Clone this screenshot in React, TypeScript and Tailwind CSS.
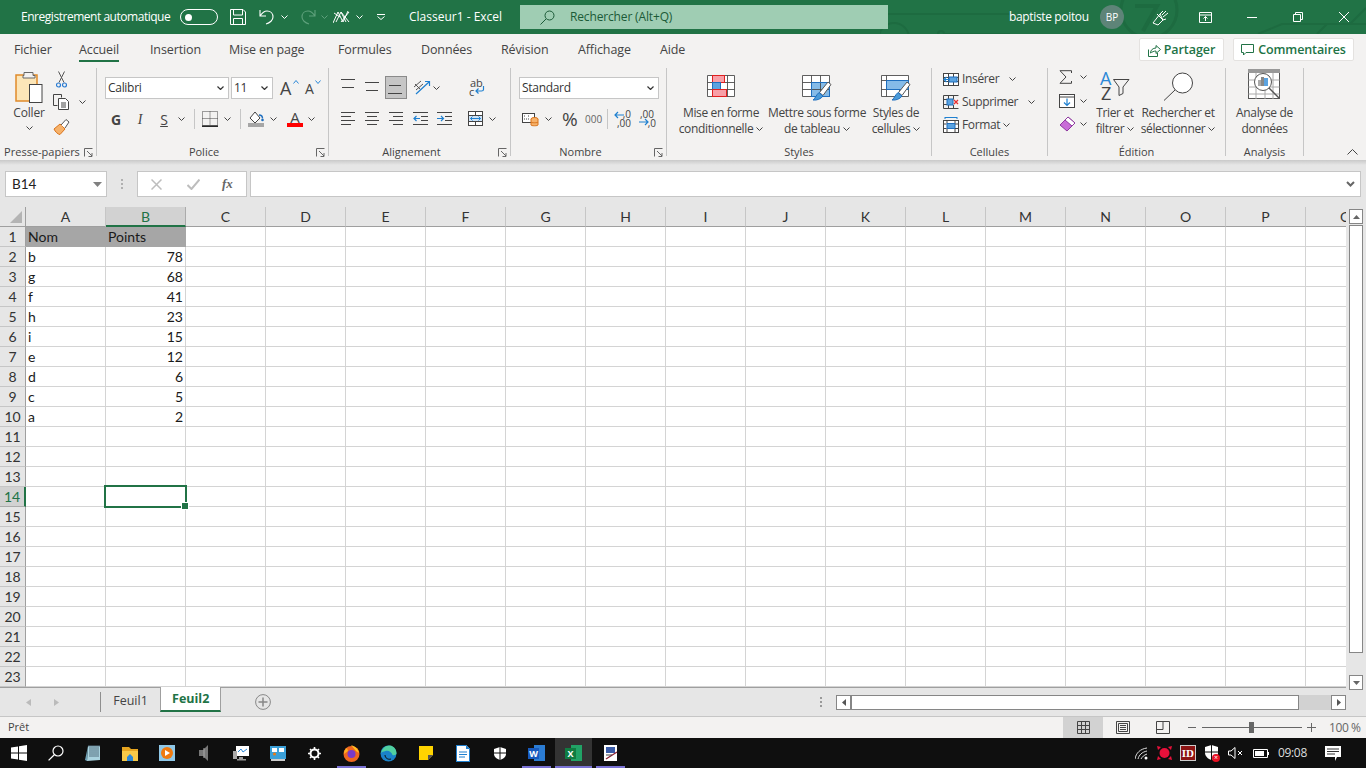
import React from "react";

const UI = "font-['Open_Sans','Noto_Sans',sans-serif]";
const CAL = "font-['Lato','Carlito',sans-serif]";

type SP = { w: number; h: number; children: React.ReactNode; className?: string };
const S = ({ w, h, children, className }: SP) => (
  <svg width={w} height={h} viewBox={`0 0 ${w} ${h}`} fill="none" className={`shrink-0 block ${className ?? ""}`}>
    {children}
  </svg>
);

const Chev = ({ c = "#444", className }: { c?: string; className?: string }) => (
  <S w={7} h={4} className={className}>
    <path d="M.5.5l3 3 3-3" stroke={c} strokeWidth="1" />
  </S>
);

const Launcher = () => (
  <S w={9} h={9}>
    <path d="M.5 8.5V.5h8M3 3l5 5M8 5v3.500H4.500" stroke="#666" />
  </S>
);

const Lines = ({ ws, gap = 4, c = "#444" }: { ws: [number, number][]; gap?: number; c?: string }) => (
  <S w={16} h={(ws.length - 1) * gap + 1}>
    {ws.map(([x, w], i) => (
      <path key={i} d={`M${x} ${i * gap + 0.5}h${w}`} stroke={c} />
    ))}
  </S>
);

const Group = ({ w, label, launcher, labelCls, children }: { w: string; label: string; launcher?: boolean; labelCls?: string; children: React.ReactNode }) => (
  <>
    <div className={`relative flex flex-col shrink-0 h-[94px] ${w}`}>
      <div className="h-[79px] flex overflow-visible">{children}</div>
      <div className={`h-[15px] leading-[14px] text-center text-[11px] text-[#444] ${labelCls ?? ""}`}>{label}</div>
      {launcher && (
        <div className="absolute right-[3px] bottom-[3px]">
          <Launcher />
        </div>
      )}
    </div>
    <div className="w-px h-[88px] mt-[2px] bg-[#c6c6c6] shrink-0" />
  </>
);

const Combo = ({ w, text }: { w: string; text: string }) => (
  <div className={`h-[22px] bg-white border border-[#c6c6c6] flex items-center justify-between pl-[2px] pr-[4px] shrink-0 ${w}`}>
    <span className="text-[12px] text-[#333] tracking-[-0.3px]">{text}</span>
    <S w={7} h={4}><path d="M.5.500l3 3 3-3" stroke="#333" strokeWidth="1.200" /></S>
  </div>
);

const Paste = () => (
  <S w={28} h={33}>
    <rect x="1" y="4" width="21" height="26" fill="#fce6b8" />
    <rect x="1" y="4" width="21" height="26" stroke="#e08a2a" strokeWidth="1.500" />
    <path d="M9 4.500V1.500h9V4.500h2V7H8V4.500z" fill="#f3f2f1" stroke="#666" />
    <rect x="14.500" y="13.500" width="12.500" height="18" fill="#fff" stroke="#444" />
  </S>
);
const Cut = () => (
  <S w={11} h={17}>
    <path d="M2.500 .5l5.500 11M8.500 .5L3 11.500" stroke="#555" />
    <circle cx="2.500" cy="14" r="2" stroke="#2b7cd3" strokeWidth="1.200" />
    <circle cx="8.500" cy="14" r="2" stroke="#2b7cd3" strokeWidth="1.200" />
  </S>
);
const Copy = () => (
  <S w={17} h={16}>
    <path d="M.5.500h8l0 3M.5.500v11h4" stroke="#444" />
    <path d="M5.500 4.500h7l3 3v8h-10z" fill="#fff" stroke="#444" />
    <path d="M8 9h5M8 11h5M8 13h5" stroke="#444" />
  </S>
);
const Painter = () => (
  <S w={17} h={16}>
    <path d="M1 10l6-5 5 5-5 5.500c-2 0-5-3-6-5.500z" fill="#f6b26b" stroke="#d9731a" />
    <path d="M8 6l5-5.500 3 2.500-4 6" fill="#fff" stroke="#555" />
  </S>
);

const Fill = () => (
  <S w={17} h={16}>
    <path d="M7 1L2 7l5 5 5-5z" stroke="#444" fill="#fff" />
    <path d="M11 4c2 0 3.500 1 3.500 3.500" stroke="#1f6fbf" strokeWidth="1.500" />
    <circle cx="14.500" cy="9" r="1.300" fill="#1f6fbf" />
    <rect x="0" y="12" width="16" height="4" fill="#a6a6a6" />
  </S>
);
const FontColor = () => (
  <div className="w-[16px] h-[16px] relative flex flex-col items-center">
    <span className="text-[15px] leading-[13px] text-[#444]">A</span>
    <div className="absolute bottom-0 left-0 right-0 h-[4px] bg-[#f00]" />
  </div>
);
const Borders = () => (
  <S w={16} h={16}>
    <path d="M.5.5h15v14H.5zM8 .5v14M.5 7.500h15" stroke="#444" strokeDasharray="1 1" />
    <path d="M0 15.200h16" stroke="#111" strokeWidth="1.400" />
  </S>
);
const Orient = () => (
  <S w={18} h={17}>
    <path d="M1 8l7-6M3 11l7-6" stroke="#555" />
    <path d="M3 15L16 3M12 2.500h4.500V7" stroke="#1f80d0" strokeWidth="1.200" />
    <path d="M2 5l5 5" stroke="#555" />
  </S>
);
const Wrap = () => (
  <div className="relative w-[16px] h-[18px]">
    <span className="absolute left-[1px] -top-[1px] text-[11px] leading-[8px] text-[#444]">ab</span>
    <span className="absolute left-0 top-[8px] text-[11px] leading-[8px] text-[#444]">c</span>
    <svg width="10" height="9" viewBox="0 0 10 9" className="absolute right-[0px] top-[6px]" fill="none">
      <path d="M8.500 0v3.500q0 1.500-2 1.500H1M3.500 2.500L1 5l2.500 2.500" stroke="#1f80d0" strokeWidth="1.200" />
    </svg>
  </div>
);
const Merge = () => (
  <S w={15} h={15}>
    <rect x=".5" y=".5" width="14" height="14" fill="#fff" stroke="#444" />
    <rect x="1" y="5" width="13" height="5" fill="#cfe4f7" />
    <path d="M1 4.500h13M1 10.500h13M7.500 0v4M7.500 11v4" stroke="#444" />
    <path d="M2.500 7.500h10M4.500 5.500l-2 2 2 2M10.500 5.500l2 2-2 2" stroke="#1f80d0" />
  </S>
);
const Account = () => (
  <S w={17} h={16}>
    <rect x=".5" y="2.500" width="12" height="9" fill="#fff" stroke="#444" />
    <path d="M2 5h2M6 5h2M2 8h6" stroke="#444" strokeDasharray="1 1" />
    <ellipse cx="12.500" cy="8" rx="3.500" ry="1.500" fill="#f6b26b" stroke="#d9731a" />
    <path d="M9 8v6c0 1 7 1 7 0V8" fill="#f6b26b" stroke="#d9731a" />
    <path d="M9 11c0 1 7 1 7 0" stroke="#d9731a" />
  </S>
);
const DecInc = ({ flip }: { flip?: boolean }) => (
  <div className="relative w-[17px] h-[16px] shrink-0">
    <span className={`absolute top-[-1px] ${flip ? "left-[1px]" : "right-0"} text-[10px] leading-[8px] text-[#444]`}>{flip ? ",00" : ",0"}</span>
    <span className="absolute bottom-0 right-0 text-[10px] leading-[8px] text-[#444]">{flip ? ",0" : ",00"}</span>
    <svg width="10" height="9" viewBox="0 0 10 9" className={`absolute left-0 ${flip ? "top-[7px]" : "top-0"}`} fill="none">
      {flip ? <path d="M0 4h9M6 1l3 3-3 3" stroke="#1f80d0" strokeWidth="1.200" /> : <path d="M1 4h9M4 1L1 4l3 3" stroke="#1f80d0" strokeWidth="1.200" />}
    </svg>
  </div>
);

const CondFmt = () => (
  <S w={28} h={23}>
    <rect x=".5" y=".5" width="27" height="21" fill="#fff" />
    <path d="M.5.500h27v21H.5zM.5 7.500h27M.5 14.500h27M5.500.5v21M13.500.5v21M20.500.5v21" stroke="#444" strokeOpacity=".85" />
    <rect x="5.500" y=".5" width="12" height="7" fill="#f8a0a8" stroke="#e02020" />
    <rect x="5.500" y="7.500" width="8" height="7" fill="#5ba3e0" stroke="#1f6fbf" />
    <rect x="5.500" y="14.500" width="14" height="7" fill="#f8a0a8" stroke="#e02020" />
  </S>
);
const Brush = ({ x, y }: { x: number; y: number }) => (
  <g transform={`translate(${x} ${y})`}>
    <path d="M16 0l3 2.500-8 11-3.500-3z" fill="#fff" stroke="#555" />
    <path d="M7 10.500l4 3.500c-2 3-6 4.500-10 4 2-1 3-5 6-7.500z" fill="#4a9ad8" stroke="#1f6fbf" />
  </g>
);
const TableFmt = () => (
  <S w={31} h={27}>
    <rect x=".5" y=".5" width="27" height="21" fill="#fff" />
    <rect x="9" y="7" width="19" height="15" fill="#85bbe8" />
    <path d="M.5.500h27v21H.5zM.5 7.500h27M.5 14.500h27M9.500.5v21M18.500.5v21" stroke="#444" strokeOpacity=".85" />
    <path d="M9.500 7.500h18v14h-18z" stroke="#1f6fbf" />
    <Brush x={10} y={7} />
  </S>
);
const CellFmt = () => (
  <S w={31} h={27}>
    <rect x=".5" y=".5" width="27" height="21" fill="#fff" />
    <rect x="5" y="5" width="23" height="10" fill="#85bbe8" />
    <path d="M.5.500h27v21H.5zM.5 5.500h27M.5 14.500h27M5.500.5v21M18.500 15v7" stroke="#444" strokeOpacity=".85" />
    <path d="M5.500 5.500h22v9h-22z" stroke="#1f6fbf" />
    <Brush x={10} y={7} />
  </S>
);

const Big = ({ icon, l1, l2, w }: { icon: React.ReactNode; l1: string; l2: string; w: string }) => (
  <div className={`flex flex-col items-center shrink-0 ${w}`}>
    <div className="h-[39px] flex justify-center pt-[6px] items-start">{icon}</div>
    <div className="text-[12px] leading-[16px] text-[#444] whitespace-nowrap text-center tracking-[-0.35px]">{l1}</div>
    <div className="text-[12px] leading-[16px] text-[#444] whitespace-nowrap flex items-center justify-center gap-[3px] tracking-[-0.35px]">
      {l2}
      <Chev />
    </div>
  </div>
);

const InsIcon = () => (
  <S w={16} h={13}>
    <rect x=".5" y=".5" width="15" height="12" fill="#fff" stroke="#444" />
    <path d="M.5 4.500h15M.5 8.500h15M5.500.5v12M10.500.5v12" stroke="#444" />
    <rect x="6" y="4" width="8" height="5" fill="#5ba3e0" stroke="#1f6fbf" />
    <path d="M1 6.500h6M3.500 4L1 6.500 3.500 9" stroke="#1f80d0" strokeWidth="1.200" />
  </S>
);
const DelIcon = () => (
  <S w={16} h={14}>
    <path d="M.5.500h15M.5 4.500h4M.5 9.500h4M.5 13.500h15M5.500.5v4M10.500.5v4M5.500 10v4M10.500 10v4M.5.500v13" stroke="#444" />
    <rect x="4" y="4" width="6" height="6" fill="#5ba3e0" stroke="#1f6fbf" />
    <path d="M11 5l4 4M15 5l-4 4" stroke="#e83030" strokeWidth="1.300" />
  </S>
);
const FmtIcon = () => (
  <S w={16} h={16}>
    <path d="M2 .5h12M2 0v2M14 0v2" stroke="#1f80d0" />
    <rect x=".5" y="3.500" width="15" height="12" fill="#fff" stroke="#444" />
    <rect x="4" y="6.500" width="8" height="5" fill="#5ba3e0" stroke="#1f6fbf" />
    <path d="M.5 7h3M.5 11.500h3M12 7h3.500M12 11.500h3.500M4 3v3M12 3v3M4 12v3M12 12v3" stroke="#444" />
  </S>
);

const Sigma = () => (
  <S w={13} h={14}><path d="M12.500 3V.7H1L7 7l-6 6.300h11.500V11" stroke="#444" /></S>
);
const FillDown = () => (
  <S w={16} h={14}>
    <rect x=".5" y=".5" width="15" height="13" fill="#fff" stroke="#444" />
    <path d="M1 3h14" stroke="#444" />
    <path d="M8 4.500v7M5 8.500l3 3 3-3" stroke="#1f80d0" strokeWidth="1.200" />
  </S>
);
const Eraser = () => (
  <S w={17} h={16}>
    <path d="M1 9l8-8 7 6-8 8z" fill="#c86dd7" stroke="#8f3aa0" />
    <path d="M6 4l7 6 3-3-7-6z" fill="#fff" stroke="#8f3aa0" />
  </S>
);
const SortFilter = () => (
  <div className="relative w-[30px] h-[29px] shrink-0">
    <span className="absolute left-0 top-[-1px] text-[18px] leading-[14px] text-[#2b88d8]">A</span>
    <span className="absolute left-[1px] top-[14px] text-[18px] leading-[14px] text-[#444]">Z</span>
    <svg width="17" height="17" viewBox="0 0 17 17" className="absolute right-0 top-[7px]" fill="none">
      <path d="M.5.500h15.500L10 8v6.500l-4 2V8z" stroke="#444" />
    </svg>
  </div>
);
const Magnifier = () => (
  <S w={31} h={29}>
    <circle cx="19.500" cy="11" r="10" fill="#fff" stroke="#444" />
    <path d="M12 18L1 28.500" stroke="#444" />
  </S>
);
const Analyse = () => (
  <S w={33} h={32}>
    <rect x=".5" y=".5" width="31" height="29" fill="#fff" stroke="#555" />
    <rect x="0" y="0" width="32" height="4" fill="#999" />
    <path d="M.5 11h31M.5 18h31M.5 25h31M8 4v26M17 4v26M25 4v26" stroke="#aaa" />
    <circle cx="15" cy="13" r="8.500" fill="#fff" stroke="#555" />
    <rect x="10" y="11" width="3" height="6" fill="#aaa" />
    <rect x="13" y="8" width="3" height="9" fill="#888" />
    <rect x="16" y="9" width="4" height="8" fill="#5ba3e0" />
    <path d="M21 19l10 10" stroke="#555" strokeWidth="1.500" />
  </S>
);

const VSep = ({ className }: { className?: string }) => <div className={`w-px h-[20px] bg-[#c6c6c6] shrink-0 ${className ?? ""}`} />;

const Ribbon = () => (
  <div className={`h-[94px] bg-[#f3f2f1] flex shrink-0 ${UI}`}>
    <Group w="w-[96px]" label="Presse-papiers" launcher labelCls="pr-[12px]">
      <div className="w-[50px] ml-[4px] flex flex-col items-center">
        <div className="mt-[5px]"><Paste /></div>
        <div className="text-[12px] leading-[16px] text-[#444] mt-[1px] tracking-[-0.2px]">Coller</div>
        <div className="mt-[5px]"><Chev /></div>
      </div>
      <div className="flex flex-col ml-[-1px]">
        <div className="mt-[5px] ml-[3px]"><Cut /></div>
        <div className="mt-[6px] flex items-center gap-[9px]"><Copy /><Chev /></div>
        <div className="mt-[9px]"><Painter /></div>
      </div>
    </Group>
    <Group w="w-[231px]" label="Police" launcher labelCls="pr-[17px]">
      <div className="flex flex-col pl-[8px]">
        <div className="flex mt-[11px] items-center">
          <Combo w="w-[124px]" text="Calibri" />
          <div className="w-[2px]" />
          <Combo w="w-[42px]" text="11" />
          <div className="ml-[7px] relative w-[16px] h-[18px]">
            <span className="text-[18px] leading-[18px] text-[#444] block">A</span>
            <svg width="6" height="4" viewBox="0 0 6 4" className="absolute -right-[3px] top-[1px]" fill="none"><path d="M.5 3.500l2.500-3 2.500 3" stroke="#2b88d8" /></svg>
          </div>
          <div className="ml-[9px] relative w-[14px] h-[18px]">
            <span className="text-[14px] leading-[20px] text-[#444] block">A</span>
            <svg width="6" height="4" viewBox="0 0 6 4" className="absolute -right-[2px] top-[1px]" fill="none"><path d="M.5.500l2.500 3 2.500-3" stroke="#2b88d8" /></svg>
          </div>
        </div>
        <div className="flex mt-[9px] items-center">
          <div className="w-[22px] h-[22px] flex items-center justify-center font-bold text-[14px] text-[#444]">G</div>
          <div className="w-[26px] h-[22px] flex items-center justify-center italic text-[14px] text-[#444] font-['Liberation_Serif',serif]">I</div>
          <div className="w-[22px] h-[22px] flex items-center justify-center underline text-[14px] text-[#444]">S</div>
          <Chev className="ml-[3px]" />
          <VSep className="ml-[9px]" />
          <div className="ml-[7px]"><Borders /></div>
          <Chev className="ml-[6px]" />
          <VSep className="ml-[9px]" />
          <div className="ml-[7px]"><Fill /></div>
          <Chev className="ml-[5px]" />
          <div className="ml-[10px]"><FontColor /></div>
          <Chev className="ml-[5px]" />
        </div>
      </div>
    </Group>
    <Group w="w-[181px]" label="Alignement" launcher labelCls="pr-[16px]">
      <div className="flex flex-col pl-[12px] w-[130px]">
        <div className="flex items-start h-[23px] mt-[10px]">
          <div className="w-[24px] mt-[3px]"><Lines ws={[[0, 14], [1, 12]]} gap={8} /></div>
          <div className="w-[20px] mt-[6px]"><Lines ws={[[0, 14], [1, 12]]} gap={8} /></div>
          <div className="w-[22px] h-[23px] bg-[#c6c6c6] border border-[#8a8a8a] flex items-end pb-[4px] pl-[2px]"><Lines ws={[[1, 12], [0, 14]]} gap={8} /></div>
          <div className="ml-[6px] mt-[3px]"><Orient /></div>
          <Chev className="ml-[2px] mt-[10px]" />
        </div>
        <div className="flex items-start mt-[13px] h-[17px]">
          <div className="w-[24px]"><Lines ws={[[0, 14], [0, 10], [0, 14], [0, 10]]} /></div>
          <div className="w-[24px]"><Lines ws={[[0, 14], [2, 10], [0, 14], [2, 10]]} /></div>
          <div className="w-[24px]"><Lines ws={[[0, 14], [4, 10], [0, 14], [4, 10]]} /></div>
          <S w={24} h={13}><path d="M0 .5h15M8 4.500h7M8 8.500h7M0 12.500h15" stroke="#444" /><path d="M1 6.500h6M3.500 4L1 6.500 3.500 9" stroke="#1f80d0" strokeWidth="1.200" /></S>
          <S w={16} h={13}><path d="M0 .5h15M8 4.500h7M8 8.500h7M0 12.500h15" stroke="#444" /><path d="M0 6.500h6M4 4l2.500 2.500L4 9" stroke="#1f80d0" strokeWidth="1.200" /></S>
        </div>
      </div>
      <div className="flex flex-col ml-[8px] w-[34px]">
        <div className="mt-[14px] ml-[2px]"><Wrap /></div>
        <div className="mt-[13px] flex items-center gap-[6px] ml-[1px]"><Merge /><Chev /></div>
      </div>
    </Group>
    <Group w="w-[155px]" label="Nombre" launcher labelCls="pr-[16px]">
      <div className="flex flex-col pl-[8px]">
        <div className="mt-[11px]"><Combo w="w-[140px]" text="Standard" /></div>
        <div className="flex items-center mt-[9px] h-[22px]">
          <div className="ml-[3px]"><Account /></div>
          <Chev className="ml-[6px]" />
          <span className="ml-[10px] text-[19px] leading-[22px] text-[#444] w-[18px]">%</span>
          <span className="ml-[5px] text-[10px] leading-[22px] text-[#666] w-[16px]">000</span>
          <VSep className="ml-[6px]" />
          <div className="ml-[6px]"><DecInc /></div>
          <div className="ml-[8px]"><DecInc flip /></div>
        </div>
      </div>
    </Group>
    <Group w="w-[264px]" label="Styles">
      <Big w="w-[108px]" l1="Mise en forme" l2="conditionnelle" icon={<div className="mt-[3px]"><CondFmt /></div>} />
      <Big w="w-[84px]" l1="Mettre sous forme" l2="de tableau" icon={<div className="mt-[3px]"><TableFmt /></div>} />
      <div className="ml-[7px]"><Big w="w-[60px]" l1="Styles de" l2="cellules" icon={<div className="mt-[3px]"><CellFmt /></div>} /></div>
    </Group>
    <Group w="w-[115px]" label="Cellules">
      <div className="flex flex-col pl-[11px] text-[12px] text-[#444] tracking-[-0.35px]">
        <div className="flex items-center h-[16px] mt-[5px]"><InsIcon /><span className="ml-[3px] leading-[16px]">Insérer</span><Chev className="ml-[10px]" /></div>
        <div className="flex items-center h-[16px] mt-[7px]"><DelIcon /><span className="ml-[3px] leading-[16px]">Supprimer</span><Chev className="ml-[10px]" /></div>
        <div className="flex items-center h-[16px] mt-[7px]"><FmtIcon /><span className="ml-[3px] leading-[16px]">Format</span><Chev className="ml-[3px]" /></div>
      </div>
    </Group>
    <Group w="w-[177px]" label="Édition">
      <div className="flex flex-col pl-[11px] w-[40px]">
        <div className="flex items-center mt-[4px] h-[14px]"><Sigma /><Chev className="ml-[8px]" /></div>
        <div className="flex items-center mt-[10px] gap-[5px] h-[14px]"><FillDown /><Chev /></div>
        <div className="flex items-center mt-[8px] gap-[4px] h-[16px]"><Eraser /><Chev /></div>
      </div>
      <Big w="w-[54px]" l1="Trier et" l2="filtrer" icon={<SortFilter />} />
      <Big w="w-[72px]" l1="Rechercher et" l2="sélectionner" icon={<Magnifier />} />
    </Group>
    <Group w="w-[77px]" label="Analysis">
      <div className="w-full flex flex-col items-center">
        <div className="mt-[3px] h-[32px]"><Analyse /></div>
        <div className="text-[12px] leading-[16px] text-[#444] mt-[4px] whitespace-nowrap tracking-[-0.35px]">Analyse de</div>
        <div className="text-[12px] leading-[16px] text-[#444] whitespace-nowrap tracking-[-0.35px]">données</div>
      </div>
    </Group>
    <div className="flex-1 flex items-end justify-end pb-[5px] pr-[8px]">
      <S w={11} h={6}><path d="M.5 5.500l5-5 5 5" stroke="#444" /></S>
    </div>
  </div>
);

const TitleBar = () => (
  <div className={`relative h-[34px] bg-[#217346] flex items-center text-white shrink-0 overflow-hidden ${UI}`}>
    <svg width="486" height="34" viewBox="0 0 486 34" className="absolute right-0 top-0" fill="none" stroke="#1d6b40" strokeWidth="2">
      <path d="M8 14H132" />
      <circle cx="14" cy="38" r="15" />
      <circle cx="61" cy="34" r="3" />
      <path d="M64 34H130" />
      <circle cx="269" cy="10" r="28" strokeWidth="3" />
      <path d="M255 6h22L263 31" strokeWidth="4" />
      <path d="M378 34L402 24H486M437 34L447 24M470 24L486 8" />
    </svg>
    <span className="relative ml-[21px] text-[12px] w-[159px] whitespace-nowrap tracking-[-0.47px]">Enregistrement automatique</span>
    <div className="relative w-[38px] h-[16px] rounded-full border border-white flex items-center pl-[4px]"><div className="w-[7px] h-[7px] rounded-full bg-white" /></div>
    <S w={16} h={16} className="relative ml-[12px]"><path d="M.5.500h12.500l2.500 2.500v12.500H.5zM3.500 1v5h9V1M3.500 15.500V9.500h9v6" stroke="#fff" /></S>
    <S w={16} h={16} className="relative ml-[13px]"><path d="M1 1v6h6M1 7c2-3 4-5 7-5 4 0 6 3 6 6 0 3-3 6-7 7" stroke="#fff" strokeWidth="1.100" /></S>
    <Chev c="#fff" className="relative ml-[6px]" />
    <S w={16} h={16} className="relative ml-[12px]"><path d="M15 1v6H9M15 7c-2-3-4-5-7-5-4 0-6 3-6 6 0 3 3 6 7 7" stroke="#5fa17c" strokeWidth="1.100" /></S>
    <Chev c="#5fa17c" className="relative ml-[5px]" />
    <S w={17} h={16} className="relative ml-[5px]"><path d="M0 14L5 3l5 10 5-11M1 4l6 4M3 13l5-10 5 10M8 3l8 10M16 3L8 13" stroke="#fff" /></S>
    <Chev c="#fff" className="relative ml-[6px]" />
    <S w={8} h={6} className="relative ml-[14px]"><path d="M0 .5h8M.5 2.500L4 5.500l3.500-3" stroke="#fff" /></S>
    <span className="relative ml-[24px] text-[12px] whitespace-nowrap w-[111px]">Classeur1  -  Excel</span>
    <div className="relative w-[368px] h-[24px] bg-[#9fcdb3] flex items-center pl-[20px] text-[#1c5b38]">
      <S w={15} h={15}><circle cx="9.500" cy="5.500" r="4.500" stroke="#1c5b38" /><path d="M6 9L.5 14.500" stroke="#1c5b38" /></S>
      <span className="ml-[15px] text-[12px] tracking-[-0.15px]">Rechercher (Alt+Q)</span>
    </div>
    <span className="relative ml-[121px] text-[12px] whitespace-nowrap w-[91px] tracking-[-0.35px]">baptiste poitou</span>
    <div className="relative w-[24px] h-[24px] rounded-full bg-[#5e8478] flex items-center justify-center text-[10px]">BP</div>
    <S w={17} h={17} className="relative ml-[28px]"><path d="M1 14l5 2 5-5-3-6zM8 5l3-3M11 11l3-1M10 6l4-4M11 8l5-4" stroke="#fff" /><path d="M5 5l6 6" stroke="#fff" /></S>
    <S w={13} h={11} className="relative ml-[30px]"><path d="M.5.500h12v10H.5zM1 3h11M6.500 9V4.500M4.500 6.500l2-2 2 2" stroke="#fff" /></S>
    <S w={10} h={1} className="relative ml-[35px]"><path d="M0 .5h10" stroke="#fff" /></S>
    <S w={10} h={10} className="relative ml-[36px]"><path d="M.5 2.500h7v7h-7zM2.500 2.500V.5h7v7h-2" stroke="#fff" /></S>
    <S w={10} h={10} className="relative ml-[36px]"><path d="M0 0l10 10M10 0L0 10" stroke="#fff" /></S>
  </div>
);

const TABS: [string, string][] = [
  ["Fichier", "w-[65px]"],
  ["Accueil", "w-[71px]"],
  ["Insertion", "w-[79px]"],
  ["Mise en page", "w-[109px]"],
  ["Formules", "w-[83px]"],
  ["Données", "w-[80px]"],
  ["Révision", "w-[77px]"],
  ["Affichage", "w-[82px]"],
  ["Aide", "w-[40px]"],
];
const TabRow = () => (
  <div className={`h-[32px] bg-[#f3f2f1] flex items-start pl-[14px] shrink-0 ${UI}`}>
    <div className="flex mt-[6px]">
      {TABS.map(([t, w]) => (
        <div key={t} className={`h-[20px] flex ${w}`}>
          <div className="relative h-[20px] text-[12.500px] leading-[19px] text-[#444] whitespace-nowrap tracking-[-0.12px]">
            {t}
            {t === "Accueil" && <div className="absolute left-0 right-0 top-[20px] h-[2px] bg-[#217346]" />}
          </div>
        </div>
      ))}
    </div>
    <div className="ml-auto flex items-center mt-[4px] gap-[9px] pr-[12px]">
      <div className="w-[85px] h-[23px] pt-[1px] bg-white rounded-[2px] border border-[#e4e2e0] flex items-center justify-center gap-[3px] text-[#217346] font-semibold text-[12.500px] tracking-[-0.05px]">
        <S w={13} h={13}><path d="M.5 5.500v7h9V9M2.500 9c0-3 2.500-5 5.500-5V1.500l4.500 4-4.500 4V7c-2 0-4 1-5.500 2z" stroke="#217346" /></S>
        Partager
      </div>
      <div className="w-[121px] h-[23px] pt-[1px] bg-white rounded-[2px] border border-[#e4e2e0] flex items-center justify-center gap-[4px] text-[#217346] font-semibold text-[12.500px] tracking-[-0.1px]">
        <S w={13} h={12}><path d="M.5.500h12v8H5L2.500 11V8.500h-2z" stroke="#217346" /></S>
        Commentaires
      </div>
    </div>
  </div>
);

const FormulaBar = () => (
  <div className={`h-[47px] bg-[#e6e6e6] flex items-start pl-[5px] pr-[5px] pt-[11px] shrink-0 ${UI}`}>
    <div className="w-[102px] h-[26px] bg-white border border-[#c6c6c6] flex items-center justify-between pl-[6px] pr-[4px]">
      <span className={`text-[13.500px] text-[#222] ${CAL}`}>B14</span>
      <S w={9} h={5}><path d="M0 0h9L4.500 5z" fill="#808080" /></S>
    </div>
    <div className="w-[30px] h-[26px] flex flex-col items-center justify-center gap-[2px]">
      <div className="w-[2px] h-[2px] bg-[#b0b0b0]" />
      <div className="w-[2px] h-[2px] bg-[#b0b0b0]" />
      <div className="w-[2px] h-[2px] bg-[#b0b0b0]" />
    </div>
    <div className="w-[110px] h-[26px] bg-white border border-[#c6c6c6] flex items-center">
      <S w={11} h={11} className="ml-[13px]"><path d="M.5.500l10 10M10.500.5l-10 10" stroke="#bdbdbd" strokeWidth="1.500" /></S>
      <S w={13} h={11} className="ml-[25px]"><path d="M.5 6l4 4 8-9.500" stroke="#bdbdbd" strokeWidth="2" /></S>
      <span className="ml-[22px] font-['Liberation_Serif',serif] italic font-bold text-[13px] text-[#666]">fx</span>
    </div>
    <div className="ml-[3px] flex-1 h-[26px] bg-white border border-[#c6c6c6] flex items-center justify-end pr-[5px]">
      <S w={9} h={6}><path d="M1 1l3.500 3.500L8 1" stroke="#666" strokeWidth="2" /></S>
    </div>
  </div>
);

const COLS = ["A", "B", "C", "D", "E", "F", "G", "H", "I", "J", "K", "L", "M", "N", "O", "P"];
const DATA: [string, string][] = [["Nom", "Points"], ["b", "78"], ["g", "68"], ["f", "41"], ["h", "23"], ["i", "15"], ["e", "12"], ["d", "6"], ["c", "5"], ["a", "2"]];
const ROWS = Array.from({ length: 23 }, (_, i) => i + 1);

const Sheet = () => (
  <div className={`relative w-[1346px] h-[480px] overflow-hidden shrink-0 ${CAL}`}>
    <div className="flex h-[20px]">
      <div className="w-[26px] h-[20px] bg-[#e6e6e6] border-r border-b border-[#9f9f9f] flex items-end justify-end pr-[3px] pb-[3px] shrink-0">
        <S w={12} h={12}><path d="M12 0v12H0z" fill="#b4b4b4" /></S>
      </div>
      {[...COLS, "Q"].map((c) => (
        <div key={c} className={`w-[80px] h-[20px] shrink-0 flex items-center justify-center text-[14px] leading-[20px] pt-[1px] border-r ${c === "B" ? "bg-[#d2d2d2] text-[#217346] border-b-2 border-b-[#217346] border-r-[#ababab]" : "bg-[#e6e6e6] text-[#333] border-b border-b-[#9f9f9f] border-r-[#c6c6c6]"}`}>{c}</div>
      ))}
    </div>
    {ROWS.map((r) => {
      const d = DATA[r - 1];
      const sel = r === 14;
      return (
        <div key={r} className="flex h-[20px]">
          <div className={`w-[26px] h-[20px] border-b flex items-center justify-center text-[14px] leading-[20px] pt-[1px] ${sel ? "bg-[#d2d2d2] text-[#217346] border-r-2 border-r-[#217346] border-b-[#ababab]" : "bg-[#e6e6e6] text-[#333] border-r border-r-[#9f9f9f] border-b-[#c6c6c6]"}`}>{r}</div>
          {COLS.map((c, i) => (
            <div key={c} className={`w-[80px] h-[20px] shrink-0 border-r border-b text-[14px] leading-[20px] text-[#1a1a1a] px-[2px] whitespace-nowrap ${r === 1 && i < 2 ? "bg-[#a6a6a6] border-[#a6a6a6]" : "bg-white border-[#d4d4d4]"} ${i === 1 && r > 1 ? "text-right" : ""}`}>
              {d && i < 2 ? d[i] : ""}
            </div>
          ))}
          <div className="flex-1 bg-white border-b border-[#d4d4d4]" />
        </div>
      );
    })}
    <div className="absolute left-[104px] top-[278px] w-[83px] h-[23px] border-2 border-[#217346]">
      <div className="absolute -right-[4px] -bottom-[4px] w-[8px] h-[8px] bg-[#217346] border border-white" />
    </div>
  </div>
);

const VScroll = () => (
  <div className="w-[20px] flex flex-col items-center pt-[2px] px-[3px]">
    <div className="w-[14px] h-[15px] bg-white border border-[#868686] flex items-center justify-center">
      <S w={7} h={4}><path d="M3.500 0L7 4H0z" fill="#666" /></S>
    </div>
    <div className="w-[14px] h-[428px] bg-white border border-[#868686] mt-[1px]" />
    <div className="w-[14px] h-[15px] bg-white border border-[#868686] flex items-center justify-center mt-[22px]">
      <S w={7} h={4}><path d="M0 0h7L3.500 4z" fill="#666" /></S>
    </div>
  </div>
);

const SheetTabs = () => (
  <div className={`h-[29px] w-[1346px] flex border-t border-[#9f9f9f] shrink-0 ${UI}`}>
    <div className="w-[101px] flex items-center pl-[26px] gap-[23px] border-r border-[#8f8f8f] h-[20px] mt-[4px]">
      <S w={5} h={7}><path d="M5 0v7L0 3.500z" fill="#bbb" /></S>
      <S w={5} h={7}><path d="M0 0v7l5-3.500z" fill="#bbb" /></S>
    </div>
    <div className="w-[60px] h-[24px] pt-[2px] flex items-center justify-center text-[12.500px] text-[#444]">Feuil1</div>
    <div className="w-[61px] h-[25px] -mt-px pt-[2px] bg-white border-b-2 border-[#217346] border-x border-x-[#9f9f9f] flex items-center justify-center text-[12.500px] font-bold text-[#217346]">Feuil2</div>
    <div className="ml-[34px] h-[24px] pt-[3px] flex items-center">
      <S w={16} h={16}><circle cx="8" cy="8" r="7.400" stroke="#888" /><path d="M8 3.500v9M3.500 8h9" stroke="#888" strokeWidth="1.500" /></S>
    </div>
    <div className="ml-[543px] w-[14px] h-[24px] pt-[3px] flex flex-col items-center justify-center gap-[2px]">
      <div className="w-[2px] h-[2px] bg-[#999]" />
      <div className="w-[2px] h-[2px] bg-[#999]" />
      <div className="w-[2px] h-[2px] bg-[#999]" />
    </div>
    <div className="ml-[8px] flex items-start pt-[7px]">
      <div className="w-[15px] h-[15px] bg-white border border-[#868686] flex items-center justify-center"><S w={4} h={7}><path d="M4 0v7L0 3.500z" fill="#555" /></S></div>
      <div className="w-[448px] h-[15px] bg-white border border-[#868686]" />
      <div className="w-[32px] h-[15px] bg-[#d2d2d2]" />
      <div className="w-[15px] h-[15px] bg-white border border-[#868686] flex items-center justify-center"><S w={4} h={7}><path d="M0 0v7l4-3.500z" fill="#555" /></S></div>
    </div>
  </div>
);

const StatusBar = () => (
  <div className={`h-[22px] bg-[#f3f2f1] border-t border-[#c6c6c6] flex items-center shrink-0 ${UI}`}>
    <span className="ml-[8px] text-[11px] text-[#444]">Prêt</span>
    <div className="ml-auto flex items-center h-[21px]">
      <div className="w-[40px] h-[21px] bg-[#d2d2d2] flex items-center justify-center">
        <S w={13} h={13}><path d="M.5.500h12v12H.5zM.5 4.500h12M.5 8.500h12M4.500.5v12M8.500.5v12" stroke="#444" /></S>
      </div>
      <div className="w-[40px] flex justify-center">
        <S w={14} h={13}><path d="M.5.500h13v12H.5zM2.500 2.500h9v8h-9zM4 4.500h6M4 6.500h6M4 8.500h6" stroke="#444" /></S>
      </div>
      <div className="w-[40px] flex justify-center">
        <S w={14} h={13}><path d="M.5.500h13v12H.5zM.5 8.500h6.500V.5" stroke="#444" /></S>
      </div>
      <S w={8} h={1} className="ml-[5px]"><path d="M0 .5h8" stroke="#666" /></S>
      <div className="ml-[6px] relative w-[100px] h-[11px] flex items-center">
        <div className="w-full h-px bg-[#666]" />
        <div className="absolute left-[47px] top-0 w-[5px] h-[11px] bg-[#666]" />
      </div>
      <S w={9} h={9} className="ml-[5px]"><path d="M0 4.500h9M4.500 0v9" stroke="#666" /></S>
      <span className="ml-[13px] mr-[8px] w-[29px] text-[12px] text-[#666] whitespace-nowrap tracking-[-0.4px]">100 %</span>
    </div>
  </div>
);

const T = ({ c, children }: { c?: string; children: React.ReactNode }) => (
  <div className={`relative w-[37px] h-[30px] flex items-center justify-center shrink-0 ${c ?? ""}`}>{children}</div>
);
const Act = () => <div className="absolute bottom-0 left-[4px] right-[4px] h-[2px] bg-[#7a72d4]" />;

const Taskbar = () => (
  <div className={`h-[30px] bg-[#0f0f0f] flex items-center text-white shrink-0 ${UI}`}>
    <T><S w={16} h={16}><path d="M0 2.500L7 1.500v6H0zM8 1.300L16 0v7.500H8zM0 8.500h7v6L0 13.500zM8 8.500h8V16L8 14.800z" fill="#fff" /></S></T>
    <T><S w={16} h={16}><circle cx="10" cy="6" r="5" stroke="#fff" strokeWidth="1.200" /><path d="M6.300 9.700L.6 15.400" stroke="#fff" strokeWidth="1.300" /></S></T>
    <T><S w={15} h={17}><path d="M3 1h12v14l-13 1z" fill="#a9d3df" /><path d="M3 1h12M4 3h10M4 5h10M4 7h10M4 9h10M4 11h10" stroke="#557080" /><path d="M3 1L0 15l2 1z" fill="#6fa3b8" /></S></T>
    <T><S w={16} h={15}><path d="M0 1h7l2 2h7v3H0z" fill="#e6a520" /><path d="M0 5h16v10H0z" fill="#f7c948" /><path d="M5 11l3-3 3 3v4H5z" fill="#2b88d8" /></S></T>
    <T><S w={16} h={16}><rect width="16" height="16" fill="#8fc8e8" /><circle cx="8" cy="8" r="6" fill="#f07a10" /><path d="M6 5l5 3-5 3z" fill="#fff" /></S></T>
    <T><S w={10} h={16}><path d="M0 5h4l5-5v16l-5-5H0z" fill="#777" /><path d="M5 3v10" stroke="#aaa" /></S></T>
    <T><S w={16} h={16}><rect x="3" y="1" width="13" height="10" fill="#fff" /><path d="M5 7l3-3 2 3 4-3" stroke="#2b88d8" /><rect x="0" y="6" width="4" height="8" fill="#aaa" /><path d="M6 12h4v2H6zM4 14h9v1.500H4z" fill="#999" /></S></T>
    <T><S w={16} h={15}><rect width="16" height="13" fill="#3ba0d8" /><rect x="2" y="2" width="5" height="4" fill="#fff" /><rect x="9" y="2" width="5" height="4" fill="#fff" /><circle cx="4.500" cy="8" r="1.500" fill="#f07a10" /><rect x="1" y="13" width="14" height="2" fill="#ccc" /></S></T>
    <T><S w={13} h={13}><circle cx="6.500" cy="6.500" r="4" stroke="#fff" strokeWidth="2" /><path d="M6.500 0v3M6.500 10v3M0 6.500h3M10 6.500h3M2 2l2 2M9 9l2 2M11 2L9 4M4 9l-2 2" stroke="#fff" strokeWidth="1.600" /></S></T>
    <T>
      <S w={17} h={17}><circle cx="8.500" cy="9" r="8" fill="#f0661f" /><path d="M8 0c3 1 7 3 8 8l-3-2z" fill="#ffc020" /><circle cx="8.500" cy="9" r="4" fill="#7a3ac8" /><path d="M1 9c0-3 1-5 3-6l1 3z" fill="#ffb020" /></S>
      <Act />
    </T>
    <T><S w={17} h={17}><circle cx="8.500" cy="8.500" r="8" fill="#1a82c8" /><path d="M1 8c1-5 5-8 9-7.500 4 .5 6.500 4 6.500 7.500 0 2-2 2.500-4 2-1-3-4-5-7-4-2 .5-3.500 1-4.500 2z" fill="#50d0a0" /><path d="M5 10c0 3 3 5 6 4" stroke="#0f0f0f" strokeWidth="1" /></S></T>
    <T><S w={14} h={14}><path d="M0 0h14v9l-5 5H0z" fill="#ffd400" /><path d="M9 14V9h5z" fill="#555" /></S></T>
    <T><S w={14} h={17}><path d="M0 0h10l4 4v13H0z" fill="#fff" /><path d="M10 0l4 4h-4z" fill="#1f80d0" /><path d="M.5.500h9.500M.5 0v17M13.500 4v13M0 16.500h14" stroke="#1f80d0" /><path d="M3 7h8M3 9.500h8M3 12h6" stroke="#1f80d0" strokeWidth="1.200" /></S></T>
    <T><S w={12} h={13}><path d="M6 0l6 2v5c0 3-3 5-6 6-3-1-6-3-6-6V2z" fill="#fff" /><path d="M6 0v13M0 6h12" stroke="#0f0f0f" /></S></T>
    <T>
      <div className="relative w-[17px] h-[16px]">
        <div className="absolute right-0 top-0 w-[11px] h-[16px] bg-[#2b7cd3]" />
        <div className="absolute left-0 top-[3px] w-[11px] h-[11px] bg-[#185abd] text-white font-bold text-[9px] leading-[11px] text-center">W</div>
      </div>
      <Act />
    </T>
    <T c="bg-[#333]">
      <div className="relative w-[17px] h-[16px]">
        <div className="absolute right-0 top-0 w-[11px] h-[16px] bg-[#21a366]" />
        <div className="absolute left-0 top-[3px] w-[11px] h-[11px] bg-[#107c41] text-white font-bold text-[9px] leading-[11px] text-center">X</div>
      </div>
      <div className="absolute bottom-0 left-0 right-0 h-[2px] bg-[#7a72d4]" />
    </T>
    <T>
      <S w={13} h={16}><rect width="13" height="16" fill="#fff" /><rect x="2" y="2" width="9" height="6" fill="#3a5ca8" /><path d="M2 14L13 7" stroke="#8a2030" strokeWidth="1.300" /><path d="M2 10h6" stroke="#444" /></S>
      <Act />
    </T>
    <div className="ml-auto flex items-center pr-[25px]">
      <S w={13} h={13} className="mr-[8px]"><path d="M0 12c1-6 5-10 12-11M3 12c1-4 4-7 9-8M6 12c1-2 3-4 6-5" stroke="#ddd" /><circle cx="11" cy="11" r="1.500" fill="#fff" /></S>
      <S w={17} h={16} className="mr-[7px]"><circle cx="8.500" cy="8" r="5" fill="#e8103a" /><path d="M1 1l4 1-3 3zM16 1l-4 1 3 3zM1 15l4-1-3-3zM16 15l-4-1 3-3z" fill="#e8103a" /></S>
      <div className="w-[16px] h-[16px] bg-[#8c1414] border border-[#ccc] text-white font-bold font-['Liberation_Serif',serif] text-[11px] leading-[14px] text-center mr-[9px]">ID</div>
      <div className="relative w-[14px] h-[16px] mr-[9px]">
        <S w={13} h={15}><path d="M6.500 0L13 2v6c0 3-3 6-6.500 7C3 14 0 11 0 8V2z" fill="#fff" /><path d="M6.500 0v15M0 7h13" stroke="#0f0f0f" /></S>
        <div className="absolute -right-[1px] -bottom-[1px] w-[8px] h-[8px] rounded-full bg-[#e81123] text-white text-[7px] leading-[8px] text-center">×</div>
      </div>
      <S w={15} h={12} className="mr-[10px]"><path d="M.5 4h2.500L7 .5v11L3 8H.5z" stroke="#fff" /><path d="M10 4l4 4M14 4l-4 4" stroke="#fff" /></S>
      <S w={16} h={9} className="mr-[9px]"><path d="M.5.500h14v8H.5z" stroke="#fff" /><path d="M2 2h9v5H2z" fill="#fff" /><path d="M15.500 3v3" stroke="#fff" /></S>
      <span className="text-[12px] text-[#ddd] mr-[18px] tracking-[-0.3px]">09:08</span>
      <S w={16} h={15}><path d="M0 0h16v11h-4l-2 4v-4H0z" fill="#fff" /><path d="M2 3h12M2 5.500h12M2 8h8" stroke="#333" /></S>
    </div>
  </div>
);

export default function App() {
  return (
    <div className="w-[1366px] h-[768px] overflow-hidden flex flex-col bg-[#f3f2f1]">
      <TitleBar />
      <TabRow />
      <Ribbon />
      <div className="h-0 relative z-10"><div className="absolute inset-x-0 top-0 h-[5px] bg-gradient-to-b from-[#c9c9c9] to-transparent" /></div>
      <FormulaBar />
      <div className="flex h-[509px] bg-[#e6e6e6] shrink-0">
        <div className="flex flex-col w-[1346px]">
          <Sheet />
          <SheetTabs />
        </div>
        <VScroll />
      </div>
      <StatusBar />
      <Taskbar />
    </div>
  );
}
